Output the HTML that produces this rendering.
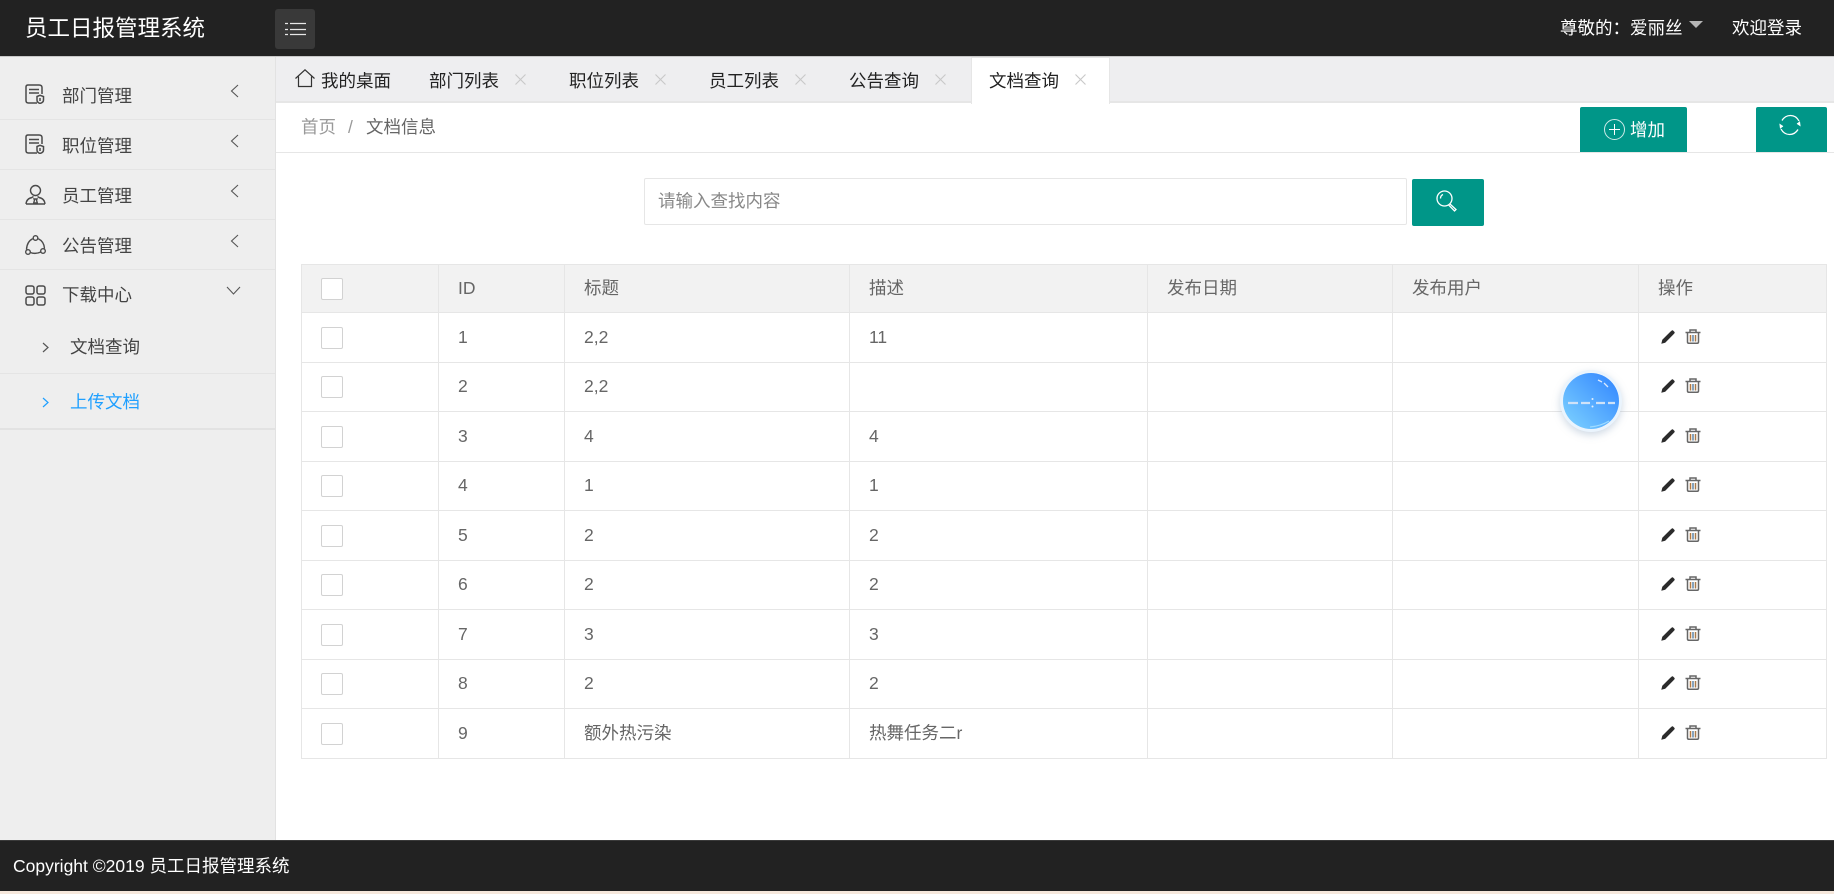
<!DOCTYPE html>
<html lang="zh-CN">
<head>
<meta charset="utf-8">
<title>员工日报管理系统</title>
<style>
html,body{margin:0;padding:0;width:1834px;height:894px;overflow:hidden;background:#fff}
body{position:relative;font-family:"Liberation Sans","Noto Sans CJK SC",sans-serif;font-size:17.5px;color:#666}
.a{position:absolute;white-space:nowrap}
.t{position:absolute;white-space:nowrap;line-height:24px;height:24px}
svg{position:absolute;overflow:visible}
table{position:absolute;left:301px;top:264px;width:1525px;border-collapse:collapse;table-layout:fixed}
td{border:1px solid #e6e6e6;padding:0 0 2px 19px;color:#666;font-size:17.5px;line-height:24px;position:relative;white-space:nowrap}
tr.h td{background:#f2f2f2}
.cb{display:block;width:20px;height:20px;border:1px solid #d2d2d2;border-radius:2px;background:#fff;position:relative;top:1px}
.ops{display:block;position:relative;height:20px;top:1px}
</style>
</head>
<body>
<svg width="0" height="0" style="position:absolute">
<symbol id="doc" viewBox="0 0 20 20"><g fill="none" stroke="#4a4a4a" stroke-width="1.500"><path d="M12 19H3.500Q1 19 1 16.500V3Q1 1 3 1H14Q17 1 17 3.500V10"/><path d="M4 5.500H14M4 9H14"/><path d="M12 12.500l3-1.200 3.500 1.200v3.500q0 2.500-3.500 3.500q-3-1-3-3.500z"/><path d="M15 14v3"/></g></symbol>
<symbol id="pen" viewBox="0 0 14 14"><path d="M0.300 13.700L1.300 9.800 9.700 1.400 12.600 4.300 4.200 12.700zM10.500 0.700q1-.8 1.800 0l1 1q.8.800 0 1.800l-.9.900L9.600 1.600z" fill="#2b2b2b"/></symbol>
<symbol id="bin" viewBox="0 0 16 15"><g fill="none" stroke="#666" stroke-width="1.500"><path d="M.5 3.500H15.500"/><path d="M5 3V1H11V3"/><path d="M2.500 4V13Q2.500 14.300 4 14.300H12Q13.500 14.300 13.500 13V4"/></g><path d="M5.500 6v6.500" stroke="#b5793f" stroke-width="1.500"/><path d="M8 6v6.500" stroke="#5f85a8" stroke-width="1.500"/><path d="M10.500 6v6.500" stroke="#a87b4c" stroke-width="1.500"/></symbol>
</svg>

<!-- header -->
<div class="a" style="left:0;top:0;width:1834px;height:56px;background:#222"></div>
<div class="a" style="left:0;top:56px;width:1834px;height:1px;background:#c8c8c8"></div>
<div class="a" style="left:25px;top:14px;font-size:22.500px;line-height:30px;color:#fff">员工日报管理系统</div>
<div class="a" style="left:275px;top:9px;width:40px;height:40px;background:#393939;border-radius:3px"></div>
<svg style="left:285px;top:22px" width="21" height="14"><path d="M5 1.500H21M5 7.500H21M5 12.500H21M0 1.500H3M0 7.500H3M0 12.500H3" stroke="#e8e8e8" stroke-width="1.300"/></svg>
<div class="t" style="left:1560px;top:16px;color:#fff">尊敬的：爱丽丝</div>
<div class="a" style="left:1689px;top:21px;width:0;height:0;border-left:7px solid transparent;border-right:7px solid transparent;border-top:7px solid #b5b5b5"></div>
<div class="t" style="left:1732px;top:16px;color:#fff">欢迎登录</div>

<!-- sidebar -->
<div class="a" style="left:0;top:57px;width:275px;height:783px;background:#eee;border-right:1px solid #e2e2e2"></div>
<div class="a" style="left:0;top:119px;width:275px;height:1px;background:#e4e4e4"></div>
<div class="a" style="left:0;top:169px;width:275px;height:1px;background:#e4e4e4"></div>
<div class="a" style="left:0;top:219px;width:275px;height:1px;background:#e4e4e4"></div>
<div class="a" style="left:0;top:269px;width:275px;height:1px;background:#e4e4e4"></div>
<div class="a" style="left:0;top:373px;width:275px;height:1px;background:#e4e4e4"></div>
<div class="a" style="left:0;top:428px;width:275px;height:2px;background:#e2e2e2"></div>

<svg style="left:25px;top:84px" width="20" height="20"><use href="#doc"/></svg>
<svg style="left:25px;top:134px" width="20" height="20"><use href="#doc"/></svg>
<svg style="left:25px;top:184px" width="21" height="21" viewBox="0 0 21 21" fill="none" stroke="#4a4a4a" stroke-width="1.400"><circle cx="10.500" cy="6.500" r="5"/><path d="M1 20Q1.500 14.500 7 13.500L8.500 12.500M20 20Q19.500 14.500 14 13.500L12.500 12.500M1 20H20M9 15h3l-.5 1 .8 3h-3.600l.8-3z"/></svg>
<svg style="left:25px;top:235px" width="21" height="21" viewBox="0 0 21 21" fill="none" stroke="#4a4a4a" stroke-width="1.400"><circle cx="10.500" cy="3" r="2.300"/><circle cx="3" cy="17" r="2.300"/><circle cx="18" cy="16" r="2.300"/><path d="M7.700 3.800Q2 6.500 1.500 14.500M13.300 3.800Q19 6.500 19.500 13.500M5.300 17.500Q10.500 19.500 15.800 17"/></svg>
<svg style="left:25px;top:285px" width="21" height="21" viewBox="0 0 21 21" fill="none" stroke="#4a4a4a" stroke-width="1.500"><rect x="1" y="1" width="8" height="8" rx="2"/><rect x="12" y="1" width="8" height="8" rx="2"/><rect x="1" y="12" width="8" height="8" rx="2"/><rect x="12" y="12" width="8" height="8" rx="2"/></svg>

<div class="t" style="left:62px;top:84px;color:#444">部门管理</div>
<div class="t" style="left:62px;top:134px;color:#444">职位管理</div>
<div class="t" style="left:62px;top:184px;color:#444">员工管理</div>
<div class="t" style="left:62px;top:234px;color:#444">公告管理</div>
<div class="t" style="left:62px;top:283px;color:#444">下载中心</div>
<div class="t" style="left:70px;top:335px;color:#444">文档查询</div>
<div class="t" style="left:70px;top:390px;color:#1e9fff">上传文档</div>

<svg style="left:230px;top:84px" width="9" height="14"><path d="M8 1L1.500 7 8 13" fill="none" stroke="#555" stroke-width="1.100"/></svg>
<svg style="left:230px;top:134px" width="9" height="14"><path d="M8 1L1.500 7 8 13" fill="none" stroke="#555" stroke-width="1.100"/></svg>
<svg style="left:230px;top:184px" width="9" height="14"><path d="M8 1L1.500 7 8 13" fill="none" stroke="#555" stroke-width="1.100"/></svg>
<svg style="left:230px;top:234px" width="9" height="14"><path d="M8 1L1.500 7 8 13" fill="none" stroke="#555" stroke-width="1.100"/></svg>
<svg style="left:226px;top:286px" width="15" height="9"><path d="M1 1L7.500 8 14 1" fill="none" stroke="#555" stroke-width="1.100"/></svg>
<svg style="left:42px;top:342px" width="7" height="11"><path d="M1 1L6 5.500 1 10" fill="none" stroke="#555" stroke-width="1.200"/></svg>
<svg style="left:42px;top:397px" width="7" height="11"><path d="M1 1L6 5.500 1 10" fill="none" stroke="#1e9fff" stroke-width="1.200"/></svg>

<!-- tabs -->
<div class="a" style="left:276px;top:57px;width:1558px;height:45px;background:#eeeef0"></div>
<div class="a" style="left:276px;top:101px;width:1558px;height:2px;background:#e6e6e6"></div>
<svg style="left:295px;top:69px" width="20" height="19" viewBox="0 0 20 19" fill="none" stroke="#333" stroke-width="1.200"><path d="M0.500 9.500L10 .8 19.500 9.500M3.500 7.500V17.500H16.500V7.500"/></svg>
<div class="t" style="left:321px;top:69px;color:#222">我的桌面</div>
<div class="t" style="left:429px;top:69px;color:#222">部门列表</div>
<div class="t" style="left:569px;top:69px;color:#222">职位列表</div>
<div class="t" style="left:709px;top:69px;color:#222">员工列表</div>
<div class="t" style="left:849px;top:69px;color:#222">公告查询</div>
<div class="a" style="left:971px;top:57px;width:137px;height:46px;background:#fff;border-left:1px solid #e6e6e6;border-right:1px solid #e6e6e6;border-top:1px solid #e6e6e6"></div>
<div class="t" style="left:989px;top:69px;color:#222">文档查询</div>
<svg style="left:515px;top:74px" width="11" height="11"><path d="M.5.500L10.500 10.500M10.500.500L.5 10.500" stroke="#c8c8c8" stroke-width="1.100"/></svg>
<svg style="left:655px;top:74px" width="11" height="11"><path d="M.5.500L10.500 10.500M10.500.500L.5 10.500" stroke="#c8c8c8" stroke-width="1.100"/></svg>
<svg style="left:795px;top:74px" width="11" height="11"><path d="M.5.500L10.500 10.500M10.500.500L.5 10.500" stroke="#c8c8c8" stroke-width="1.100"/></svg>
<svg style="left:935px;top:74px" width="11" height="11"><path d="M.5.500L10.500 10.500M10.500.500L.5 10.500" stroke="#c8c8c8" stroke-width="1.100"/></svg>
<svg style="left:1075px;top:74px" width="11" height="11"><path d="M.5.500L10.500 10.500M10.500.500L.5 10.500" stroke="#c8c8c8" stroke-width="1.100"/></svg>

<!-- breadcrumb -->
<div class="a" style="left:276px;top:152px;width:1558px;height:1px;background:#e6e6e6"></div>
<div class="t" style="left:301px;top:115px;color:#999">首页</div>
<div class="t" style="left:348px;top:115px;color:#999">/</div>
<div class="t" style="left:366px;top:115px;color:#666">文档信息</div>

<div class="a" style="left:1580px;top:107px;width:107px;height:45px;background:#009688;border-radius:2px 2px 0 0"></div>
<svg style="left:1604px;top:119px" width="21" height="21" fill="none" stroke="#fff" stroke-width="1"><circle cx="10.500" cy="10.500" r="10" stroke-opacity=".8"/><path d="M10.500 5V16M5 10.500H16"/></svg>
<div class="t" style="left:1630px;top:118px;color:#fff">增加</div>
<div class="a" style="left:1756px;top:107px;width:71px;height:45px;background:#009688;border-radius:2px 2px 0 0"></div>
<svg style="left:1779px;top:114px" width="22" height="22" viewBox="0 0 22 22" fill="none" stroke="#fff" stroke-width="1.300"><path d="M3 6.500Q6 1.500 11.500 1.500 17 1.500 20 7"/><path d="M19 15.500Q16 20.500 10.500 20.500 5 20.500 2 15"/><path d="M20.500 7.500L21 11.500 18 9.500" fill="#fff" stroke-width="1"/><path d="M1.500 14.500L1 10.500 4 12.500" fill="#fff" stroke-width="1"/></svg>

<!-- search -->
<div class="a" style="left:644px;top:178px;width:761px;height:45px;border:1px solid #e6e6e6;border-radius:2px;background:#fff"></div>
<div class="t" style="left:658px;top:189px;color:#888">请输入查找内容</div>
<div class="a" style="left:1412px;top:179px;width:72px;height:47px;background:#009688;border-radius:2px"></div>
<svg style="left:1436px;top:190px" width="22" height="22" viewBox="0 0 22 22" fill="none" stroke="#fff" stroke-width="1.300"><circle cx="8.500" cy="8.500" r="7.500"/><path d="M4.500 8.500Q4.500 5.500 7 4.500"/><path d="M14 14L20 19.500 18.500 21 12.800 15.200"/></svg>

<!-- table -->
<table>
<colgroup><col style="width:137px"><col style="width:126px"><col style="width:285px"><col style="width:298px"><col style="width:245px"><col style="width:246px"><col style="width:188px"></colgroup>
<tr class="h" style="height:48px"><td><span class="cb"></span></td><td>ID</td><td>标题</td><td>描述</td><td>发布日期</td><td>发布用户</td><td>操作</td></tr>
<tr style="height:50px"><td><span class="cb"></span></td><td>1</td><td>2,2</td><td>11</td><td></td><td></td><td><span class="ops"><svg style="left:3px;top:2px" width="14" height="14"><use href="#pen"/></svg><svg style="left:27px;top:1px" width="16" height="15"><use href="#bin"/></svg></span></td></tr>
<tr style="height:49px"><td><span class="cb"></span></td><td>2</td><td>2,2</td><td></td><td></td><td></td><td><span class="ops"><svg style="left:3px;top:2px" width="14" height="14"><use href="#pen"/></svg><svg style="left:27px;top:1px" width="16" height="15"><use href="#bin"/></svg></span></td></tr>
<tr style="height:50px"><td><span class="cb"></span></td><td>3</td><td>4</td><td>4</td><td></td><td></td><td><span class="ops"><svg style="left:3px;top:2px" width="14" height="14"><use href="#pen"/></svg><svg style="left:27px;top:1px" width="16" height="15"><use href="#bin"/></svg></span></td></tr>
<tr style="height:49px"><td><span class="cb"></span></td><td>4</td><td>1</td><td>1</td><td></td><td></td><td><span class="ops"><svg style="left:3px;top:2px" width="14" height="14"><use href="#pen"/></svg><svg style="left:27px;top:1px" width="16" height="15"><use href="#bin"/></svg></span></td></tr>
<tr style="height:50px"><td><span class="cb"></span></td><td>5</td><td>2</td><td>2</td><td></td><td></td><td><span class="ops"><svg style="left:3px;top:2px" width="14" height="14"><use href="#pen"/></svg><svg style="left:27px;top:1px" width="16" height="15"><use href="#bin"/></svg></span></td></tr>
<tr style="height:49px"><td><span class="cb"></span></td><td>6</td><td>2</td><td>2</td><td></td><td></td><td><span class="ops"><svg style="left:3px;top:2px" width="14" height="14"><use href="#pen"/></svg><svg style="left:27px;top:1px" width="16" height="15"><use href="#bin"/></svg></span></td></tr>
<tr style="height:50px"><td><span class="cb"></span></td><td>7</td><td>3</td><td>3</td><td></td><td></td><td><span class="ops"><svg style="left:3px;top:2px" width="14" height="14"><use href="#pen"/></svg><svg style="left:27px;top:1px" width="16" height="15"><use href="#bin"/></svg></span></td></tr>
<tr style="height:49px"><td><span class="cb"></span></td><td>8</td><td>2</td><td>2</td><td></td><td></td><td><span class="ops"><svg style="left:3px;top:2px" width="14" height="14"><use href="#pen"/></svg><svg style="left:27px;top:1px" width="16" height="15"><use href="#bin"/></svg></span></td></tr>
<tr style="height:50px"><td><span class="cb"></span></td><td>9</td><td>额外热污染</td><td>热舞任务二r</td><td></td><td></td><td><span class="ops"><svg style="left:3px;top:2px" width="14" height="14"><use href="#pen"/></svg><svg style="left:27px;top:1px" width="16" height="15"><use href="#bin"/></svg></span></td></tr>
</table>

<!-- floating ball -->
<div class="a" style="left:1560px;top:370px;width:62px;height:62px;border-radius:50%;background:#eaf4fd;box-shadow:0 3px 8px rgba(120,150,180,.35)"></div>
<svg style="left:1563px;top:373px" width="56" height="56" viewBox="0 0 56 56">
<defs><linearGradient id="g" x1="1" y1="0" x2="0" y2="1"><stop offset="0" stop-color="#2f83ff"/><stop offset="1" stop-color="#7fd4ff"/></linearGradient></defs>
<circle cx="28" cy="28" r="28" fill="url(#g)"/>
<path d="M35 7l4 2M41 10l4 4" stroke="#dbe9ff" stroke-width="1.300" fill="none"/>
<path d="M5 30H15M18 30H27M33 30H42M45 30H52" stroke="#cfe2f8" stroke-width="2.200" fill="none"/>
<circle cx="29.500" cy="26" r="1" fill="#e6f0fb"/><circle cx="29.500" cy="33.500" r="1" fill="#e6f0fb"/>
<path d="M27 54Q38 53 46 48" stroke="#9edbff" stroke-width="1.200" fill="none"/>
</svg>

<!-- footer -->
<div class="a" style="left:0;top:840px;width:1834px;height:51px;background:#222;border-top:1px solid #3a3a3a;box-sizing:border-box"></div>
<div class="t" style="left:13px;top:854px;color:#fff">Copyright ©2019 员工日报管理系统</div>
<div class="a" style="left:0;top:891px;width:1834px;height:3px;background:#f6e8dc"></div>
</body>
</html>
